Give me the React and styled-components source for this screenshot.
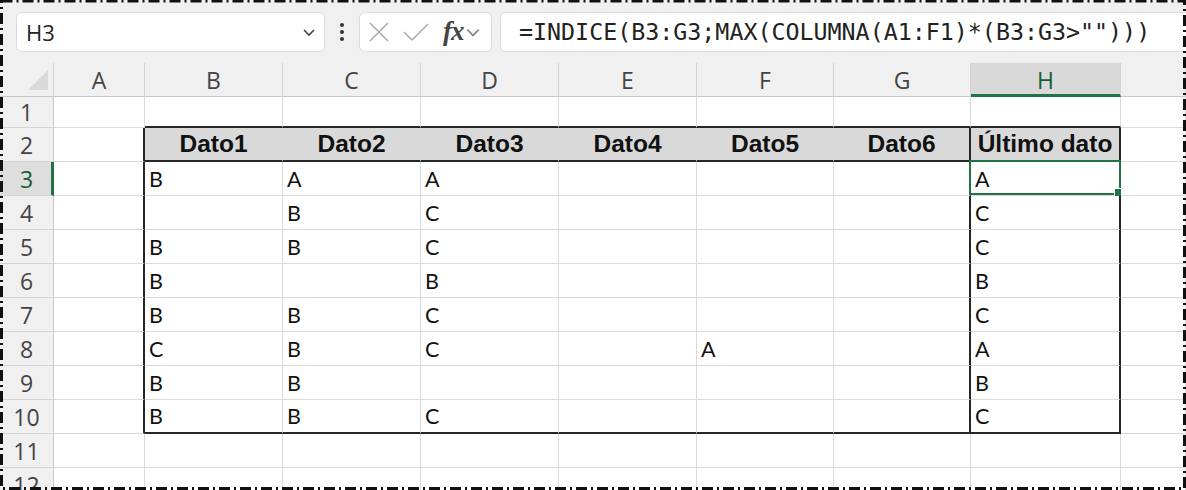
import React from 'react';
import styled, { createGlobalStyle } from 'styled-components';

const GlobalStyle = createGlobalStyle`
  html, body {
    margin: 0;
    padding: 0;
    background: #ffffff;
    overflow: hidden;
  }
`;

const COLS = ['A', 'B', 'C', 'D', 'E', 'F', 'G', 'H', 'I'];
const HEADERS = ['Dato1', 'Dato2', 'Dato3', 'Dato4', 'Dato5', 'Dato6', 'Último dato'];
const DATA = [
  ['B', 'A', 'A', '', '', '', 'A'],
  ['', 'B', 'C', '', '', '', 'C'],
  ['B', 'B', 'C', '', '', '', 'C'],
  ['B', '', 'B', '', '', '', 'B'],
  ['B', 'B', 'C', '', '', '', 'C'],
  ['C', 'B', 'C', '', 'A', '', 'A'],
  ['B', 'B', '', '', '', '', 'B'],
  ['B', 'B', 'C', '', '', '', 'C'],
];

const Frame = styled.div`
  position: relative;
  width: 1186px;
  height: 490px;
  overflow: hidden;
  background: #ffffff;
`;

const FrameLine = styled.svg`
  position: absolute;
  left: 0;
  top: 0;
  pointer-events: none;
`;

const FormulaBar = styled.div`
  display: flex;
  align-items: center;
  height: 63px;
  padding-left: 16px;
  background: #f0f0f0;
  box-sizing: border-box;
`;

const NameBox = styled.div`
  width: 309px;
  height: 40px;
  box-sizing: border-box;
  background: #fff;
  border: 1px solid #dcdcdc;
  border-radius: 6px;
  display: flex;
  align-items: center;
  justify-content: space-between;
  padding: 0 8px 0 9px;
  font-family: "Open Sans", "Noto Sans", sans-serif;
  font-size: 22px;
  color: #242424;
`;

const Dots = styled.div`
  width: 34px;
  display: flex;
  flex-direction: column;
  align-items: center;
  gap: 3px;
  span {
    width: 4px;
    height: 4px;
    border-radius: 50%;
    background: #333;
  }
`;

const FnBox = styled.div`
  width: 133px;
  height: 40px;
  box-sizing: border-box;
  background: #fff;
  border: 1px solid #dcdcdc;
  border-radius: 6px;
  display: flex;
  align-items: center;
  padding-left: 9px;
  gap: 14px;
`;

const Fx = styled.span`
  font-family: "Liberation Serif", "DejaVu Serif", serif;
  font-style: italic;
  font-weight: bold;
  font-size: 27px;
  line-height: 1;
  color: #444;
  margin-left: 0;
  margin-right: -13px;
  letter-spacing: -1px;
`;

const FormulaBox = styled.div`
  flex: 1;
  margin-left: 8px;
  margin-right: -20px;
  height: 40px;
  box-sizing: border-box;
  background: #fff;
  border: 1px solid #dcdcdc;
  border-radius: 6px;
  display: flex;
  align-items: center;
  padding-left: 18px;
  font-family: "DejaVu Sans Mono", "Liberation Mono", monospace;
  font-size: 23.3px;
  color: #222;
  white-space: nowrap;
`;

const Sheet = styled.div`
  display: grid;
  grid-template-columns: 54px 91px repeat(4, 138px) 137px 137px 150px 1fr;
  grid-template-rows: 34px 31px repeat(10, 34px) 34px;
`;

const Corner = styled.div`
  position: relative;
  background: #f0f0f0;
  border-right: 1px solid #d4d4d4;
  border-bottom: 1px solid #c8c8c8;
  box-sizing: border-box;
`;

const CornerMark = styled.svg`
  position: absolute;
  right: 5px;
  bottom: 6px;
`;

const ColHead = styled.div`
  background: ${p => (p.$selected ? '#d9d9d9' : '#f0f0f0')};
  color: ${p => (p.$selected ? '#185c37' : '#444')};
  border-right: 1px solid #d4d4d4;
  border-bottom: ${p => (p.$selected ? '3px solid #217346' : '1px solid #c8c8c8')};
  box-sizing: border-box;
  display: flex;
  align-items: center;
  justify-content: center;
  font-family: "Open Sans", "Noto Sans", sans-serif;
  font-size: 23px;
  padding-top: ${p => (p.$selected ? '2px' : '0')};
`;

const RowHead = styled.div`
  background: ${p => (p.$selected ? '#dedede' : '#f0f0f0')};
  color: ${p => (p.$selected ? '#185c37' : '#444')};
  border-right: ${p => (p.$selected ? '3px solid #217346' : '1px solid #c8c8c8')};
  border-bottom: 1px solid #d4d4d4;
  box-sizing: border-box;
  display: flex;
  align-items: center;
  justify-content: center;
  font-family: "Open Sans", "Noto Sans", sans-serif;
  font-size: 23px;
  padding-left: ${p => (p.$selected ? '2px' : '0')};
`;

const Cell = styled.div`
  position: relative;
  box-sizing: border-box;
  background: ${p => (p.$head ? '#d9d9d9' : '#fff')};
  border-right: ${p => (p.$right ? '2px solid #262626' : '1px solid #dadada')};
  border-bottom: ${p => (p.$bottom ? '2px solid #262626' : '1px solid #dadada')};
  display: flex;
  align-items: center;
  justify-content: ${p => (p.$head ? 'center' : 'flex-start')};
  padding-left: ${p => (p.$head ? '0' : '4px')};
  font-family: ${p => (p.$head ? '"Liberation Sans", Arial, sans-serif' : 'Lato, "Open Sans", sans-serif')};
  font-weight: ${p => (p.$head ? 'bold' : 'normal')};
  font-size: ${p => (p.$head ? '24.5px' : '21.5px')};
  color: #111;
  white-space: nowrap;
`;

const Selection = styled.div`
  position: absolute;
  left: -2px;
  top: -2px;
  right: -2px;
  bottom: 0;
  border: 2px solid #217346;
  pointer-events: none;
`;

const Handle = styled.div`
  position: absolute;
  right: -4px;
  bottom: -4px;
  width: 7px;
  height: 7px;
  background: #217346;
  border: 1px solid #fff;
`;

const Chevron = ({ color = '#444', size = 14 }) => (
  <svg width={size} height={size} viewBox="0 0 14 14">
    <path d="M2 5 L7 10 L12 5" fill="none" stroke={color} strokeWidth="1.6" />
  </svg>
);

function cellText(row, col) {
  if (row === 2 && col >= 1 && col <= 7) return HEADERS[col - 1];
  if (row >= 3 && row <= 10 && col >= 1 && col <= 7) return DATA[row - 3][col - 1];
  return '';
}

export default function App() {
  const rows = [];
  for (let r = 1; r <= 12; r++) {
    rows.push(
      <RowHead key={'rh' + r} $selected={r === 3}>{r}</RowHead>
    );
    for (let c = 0; c < COLS.length; c++) {
      const inTableRows = r >= 2 && r <= 10;
      const right = inTableRows && (c === 0 || c === 6 || c === 7);
      const bottom = (r === 1 || r === 2 || r === 10) && c >= 1 && c <= 7;
      const head = r === 2 && c >= 1 && c <= 7;
      rows.push(
        <Cell key={r + '-' + c} $right={right} $bottom={bottom} $head={head}>
          {cellText(r, c)}
          {r === 3 && c === 7 && (
            <Selection>
              <Handle />
            </Selection>
          )}
        </Cell>
      );
    }
  }

  return (
    <>
      <GlobalStyle />
      <Frame>
        <FormulaBar>
          <NameBox>
            <span>H3</span>
            <Chevron />
          </NameBox>
          <Dots>
            <span />
            <span />
            <span />
          </Dots>
          <FnBox>
            <svg width="20" height="20" viewBox="0 0 20 20">
              <path d="M1 1 L19 19 M19 1 L1 19" stroke="#a8a8a8" strokeWidth="1.5" fill="none" />
            </svg>
            <svg width="26" height="20" viewBox="0 0 26 20">
              <path d="M1 10 L9 18 L25 2" stroke="#a8a8a8" strokeWidth="1.5" fill="none" />
            </svg>
            <Fx>fx</Fx>
            <Chevron color="#8a8a8a" size={16} />
          </FnBox>
          <FormulaBox>=INDICE(B3:G3;MAX(COLUMNA(A1:F1)*(B3:G3&gt;"")))</FormulaBox>
        </FormulaBar>
        <Sheet>
          <Corner>
            <CornerMark width="20" height="20" viewBox="0 0 20 20">
              <path d="M20 0 L20 20 L0 20 Z" fill="#d9d9d9" />
            </CornerMark>
          </Corner>
          {COLS.map(c => (
            <ColHead key={c} $selected={c === 'H'}>{c === 'I' ? '' : c}</ColHead>
          ))}
          {rows}
        </Sheet>
        <FrameLine width="1186" height="490">
          <rect x="1.5" y="1" width="1183" height="487.5" fill="none" stroke="#111" strokeWidth="3" strokeDasharray="11 4 2 4" />
        </FrameLine>
      </Frame>
    </>
  );
}
